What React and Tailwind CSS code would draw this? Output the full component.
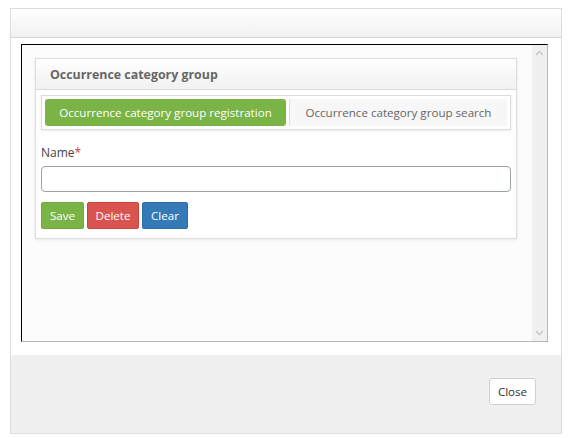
import React from 'react';

function Chevron({ up }) {
  return (
    <svg width="9" height="6" viewBox="0 0 9 6" className="block">
      <path d={up ? 'M1 5 L4.5 1.5 L8 5' : 'M1 1 L4.5 4.5 L8 1'} fill="none" stroke="#c4c4c4" strokeWidth="1.4" />
    </svg>
  );
}

export default function App() {
  return (
    <div className="w-[570px] h-[438px] bg-white overflow-hidden" style={{ fontFamily: '"Open Sans", "Segoe UI", sans-serif' }}>
      <div className="ml-[10px] mt-[8px] w-[552px] h-[426px] border border-[#dcdcdc] flex flex-col bg-white">
        <div className="h-[29px] shrink-0 bg-gradient-to-b from-white to-[#f1f1f1] border-b border-[#d6d6d6]" />
        <div className="flex-1 pl-[10px] pt-[6px]">
          <div className="w-[527px] h-[298px] border-t border-l border-black border-r border-b border-r-[#b8b8b8] border-b-[#b8b8b8] bg-[#fcfcfc] flex">
            <div className="flex-1 pl-[13px] pt-[13px]">
              <div className="w-[482px] border border-[#dcdcdc] bg-white shadow-[0_1px_3px_rgba(0,0,0,0.08)] pb-[9px]">
                <div className="h-[31px] bg-gradient-to-b from-white to-[#f1f1f1] border-b border-[#dcdcdc] flex items-center pl-[14px] pt-[3px]">
                  <span className="text-[12.4px] font-bold text-[#666]">Occurrence category group</span>
                </div>
                <div className="mx-[5px] mt-[5px] border border-[#dcdcdc] p-[3px] flex shadow-[0_1px_2px_rgba(0,0,0,0.08)]">
                  <div className="w-[241px] h-[27px] rounded-[3px] bg-[#7ab446] text-white text-[11.6px] flex items-center justify-center">
                    Occurrence category group registration
                  </div>
                  <div className="flex-1 ml-[3px] border-l border-[#dcdcdc] bg-[#f7f7f7] text-[#666] text-[11.6px] flex items-center justify-center">
                    Occurrence category group search
                  </div>
                </div>
                <div className="px-[5px] mt-[15px]">
                  <div className="text-[12px] text-[#444] leading-[16px]">
                    Name<span className="text-[#e52e2e]">*</span>
                  </div>
                  <div className="mt-[5px] h-[26px] border border-[#9aa5a3] rounded-[4px] bg-white" />
                  <div className="mt-[10px] flex gap-[3px]">
                    <button className="w-[43px] h-[27px] rounded-[2px] bg-[#7ab446] border border-[#72a83f] text-white text-[11.6px]">Save</button>
                    <button className="w-[52px] h-[27px] rounded-[2px] bg-[#d9534f] border border-[#c9433f] text-white text-[11.6px]">Delete</button>
                    <button className="w-[46px] h-[27px] rounded-[2px] bg-[#337ab7] border border-[#2e6da4] text-white text-[11.6px]">Clear</button>
                  </div>
                </div>
              </div>
            </div>
            <div className="w-[15px] bg-[#f0f0f0] flex flex-col justify-between items-center py-[5px]">
              <Chevron up />
              <Chevron />
            </div>
          </div>
        </div>
        <div className="h-[78px] shrink-0 bg-[#f0f0f0] flex items-center justify-end pr-[25px] pb-[5px]">
          <button className="w-[47px] h-[27px] bg-white border border-[#d0d0d0] rounded-[3px] text-[11.6px] text-[#333]">Close</button>
        </div>
      </div>
    </div>
  );
}
